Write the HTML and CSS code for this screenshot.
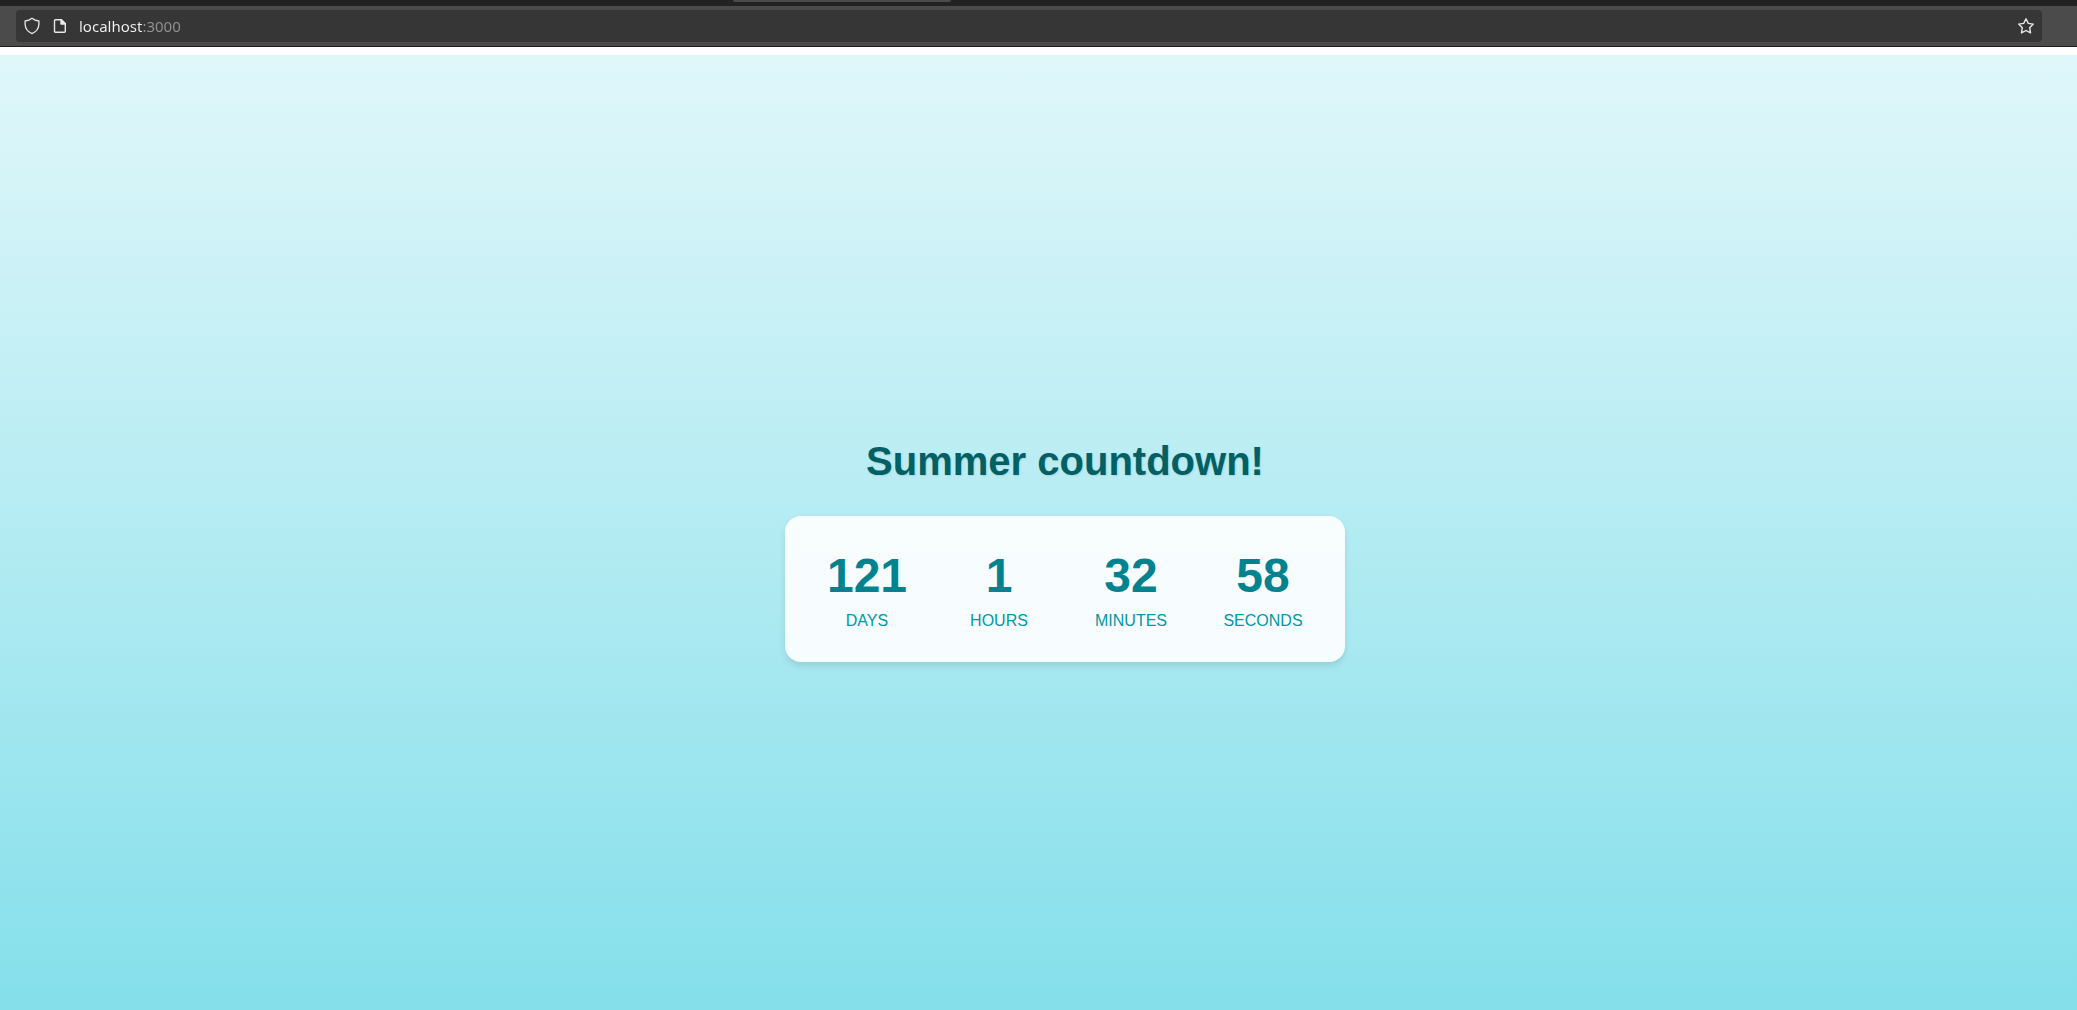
FILE: index.html
```html
<!DOCTYPE html>
<html lang="en">
<head>
  <meta charset="utf-8">
  <meta name="viewport" content="width=device-width, initial-scale=1">
  <title>Summer countdown!</title>
  <link rel="stylesheet" href="styles.css">
</head>
<body>
  <header class="browser">
    <div class="tabs"><div class="tab"></div></div>
    <div class="toolbar">
      <form class="address">
        <button class="icon-button" type="button" aria-label="Tracking protection">
          <svg width="18" height="18" viewBox="0 0 18 18" fill="none" stroke="currentColor" stroke-width="1.3" stroke-linejoin="round"><path d="M9 1.3C11 2.9 13.200 3.700 15.900 4V7.500C15.600 11.500 13.200 14.800 9 16.700C4.800 14.800 2.400 11.500 2.100 7.500V4C4.800 3.700 7 2.900 9 1.300Z"/></svg>
        </button>
        <button class="icon-button" type="button" aria-label="Site information">
          <svg width="18" height="18" viewBox="0 0 18 18" fill="none" stroke="currentColor" stroke-width="1.4" stroke-linejoin="round"><path d="M4.500 2.700H10.500L14.300 6.500V14.300Q14.300 15.300 13.300 15.300H4.500Q3.500 15.300 3.500 14.300V3.700Q3.500 2.700 4.500 2.700Z"/><path d="M10 2.700V7H14.300Z" fill="currentColor"/></svg>
        </button>
        <input class="url" type="text" value="localhost:3000" aria-label="Address" spellcheck="false">
        <button class="icon-button" type="button" aria-label="Bookmark this page">
          <svg width="18" height="18" viewBox="0 0 18 18" fill="none" stroke="currentColor" stroke-width="1.4" stroke-linejoin="round"><path d="M9 1.800L11.300 6.400L16.300 7.100L12.700 10.700L13.500 15.900L9 13.500L4.500 15.900L5.300 10.700L1.700 7.100L6.700 6.400Z"/></svg>
        </button>
      </form>
    </div>
  </header>
  <main class="page">
    <h1 class="title">Summer countdown!</h1>
    <section class="countdown" aria-label="Time left until summer">
      <div class="unit"><span class="value">121</span><span class="label">Days</span></div>
      <div class="unit"><span class="value">1</span><span class="label">Hours</span></div>
      <div class="unit"><span class="value">32</span><span class="label">Minutes</span></div>
      <div class="unit"><span class="value">58</span><span class="label">Seconds</span></div>
    </section>
  </main>
</body>
</html>
```
FILE: styles.css
```css
* {
  box-sizing: border-box;
}

body {
  margin: 0;
  height: 100vh;
  overflow: hidden;
  background: #fff;
  font-family: "Liberation Sans", Arial, sans-serif;
}

.browser {
  margin-bottom: 8px;
  border-bottom: 1px solid #1c1c1c;
}

.tabs {
  height: 6px;
  padding: 0 54.200% 0 35.300%;
  background: #222;
}

.tab {
  height: 2px;
  border-radius: 0 0 2px 2px;
  background: #4b4b4b;
}

.toolbar {
  padding: 4px 35px 4px 16px;
  background: #4b4b4b;
}

.address {
  display: flex;
  align-items: center;
  height: 32px;
  padding: 0 7px;
  border-radius: 4px;
  background: #363636;
}

.icon-button {
  display: flex;
  margin-right: 10px;
  padding: 0;
  border: 0;
  background: none;
  color: #e8e8e8;
}

.icon-button:last-child {
  margin-right: 0;
}

.url {
  flex: 1;
  min-width: 0;
  padding: 0;
  border: 0;
  outline: 0;
  background: linear-gradient(90deg, #f4f4f4 63px, #949494 63px);
  background-clip: text;
  -webkit-text-fill-color: transparent;
  color: #f4f4f4;
  font: 15px/20px "Noto Sans", "Open Sans", sans-serif;
}

.page {
  display: flex;
  flex-direction: column;
  align-items: center;
  justify-content: center;
  min-height: calc(100vh - 20px);
  padding-left: 53px;
  background: linear-gradient(180deg, #e0f7fa, #b2ebf2 50%, #80deea);
}

.title {
  margin: 0 0 32px;
  color: #006064;
  font-size: 40px;
  line-height: 46px;
  text-shadow: 1px 1px 2px rgba(0, 0, 0, 0.1);
}

.countdown {
  display: flex;
  gap: 32px;
  padding: 32px;
  border-radius: 16px;
  background: rgba(255, 255, 255, 0.9);
  box-shadow: 0 4px 6px rgba(0, 0, 0, 0.1);
}

.unit {
  display: flex;
  flex-direction: column;
  align-items: center;
  width: 100px;
}

.value {
  margin-bottom: 8px;
  color: #00838f;
  font-size: 48px;
  font-weight: bold;
  line-height: 56px;
}

.label {
  color: #0097a7;
  font-size: 16px;
  line-height: 18px;
  text-transform: uppercase;
}
```
